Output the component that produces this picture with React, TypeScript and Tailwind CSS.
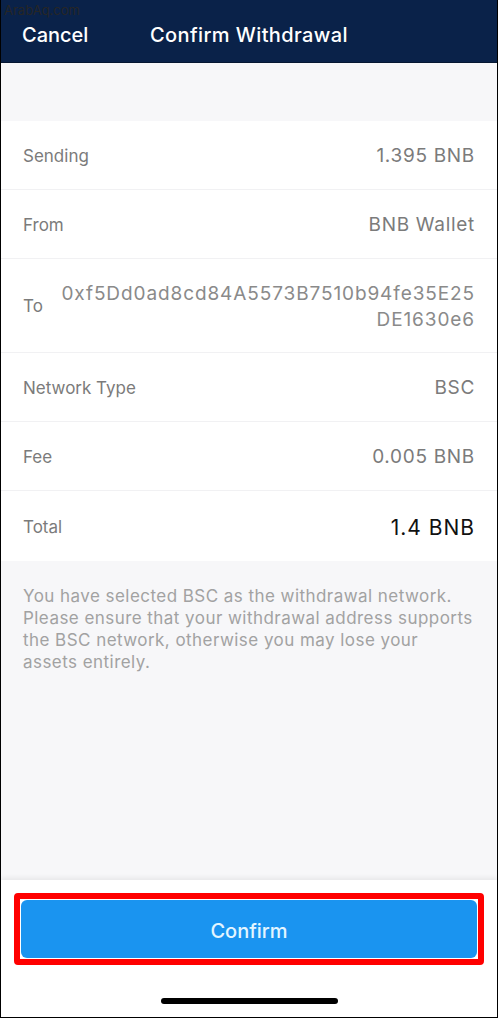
const font = { fontFamily: "Inter, 'Liberation Sans', sans-serif" };

function Row({ label, value }: { label: string; value: string }) {
  return (
    <div className="flex h-[69px] items-center justify-between border-b border-[#f1f1f3] px-[22px] pt-[3px]">
      <span className="text-[17px] text-[#7b7b7b]">{label}</span>
      <span className="text-[19px] tracking-[0.7px] text-[#7b7b7b]">{value}</span>
    </div>
  );
}

export default function App() {
  return (
    <div
      style={font}
      className="relative flex h-[1018px] w-[498px] flex-col overflow-hidden border-x border-b border-black bg-[#f7f7f9]"
    >
      <span className="absolute left-[3px] top-[1px] text-[13px] text-[#262626]">ArabAq.com</span>

      <header className="grid h-[63px] grid-cols-[1fr_auto_1fr] items-center border-b border-[#061732] bg-[#0a2249] px-[21px] pt-[8px] text-[20px] font-medium text-white">
        <span>Cancel</span>
        <span className="tracking-[0.4px]">Confirm Withdrawal</span>
        <span />
      </header>

      <div className="h-[58px]" />

      <div className="bg-white">
        <Row label="Sending" value="1.395 BNB" />
        <Row label="From" value="BNB Wallet" />
        <div className="flex h-[94px] items-center justify-between border-b border-[#f1f1f3] px-[22px] pt-[3px]">
          <span className="text-[17px] text-[#7b7b7b]">To</span>
          <span className="text-right text-[19px] leading-[26px] tracking-[0.9px] text-[#8a8a8a]">
            0xf5Dd0ad8cd84A5573B7510b94fe35E25
            <br />
            DE1630e6
          </span>
        </div>
        <Row label="Network Type" value="BSC" />
        <Row label="Fee" value="0.005 BNB" />
        <div className="flex h-[70px] items-center justify-between px-[22px] pt-[3px]">
          <span className="text-[17px] text-[#7b7b7b]">Total</span>
          <span className="text-[21px] tracking-[1px] text-[#111]">1.4 BNB</span>
        </div>
      </div>

      <p className="flex-1 whitespace-nowrap px-[22px] pt-[24px] text-[17px] leading-[22px] tracking-[0.45px] text-[#a2a2a2]">
        You have selected BSC as the withdrawal network.
        <br />
        Please ensure that your withdrawal address supports
        <br />
        the BSC network, otherwise you may lose your
        <br />
        assets entirely.
      </p>

      <div className="flex h-[137px] flex-col bg-white px-[13px] pt-[13px] shadow-[0_-2px_5px_rgba(0,0,0,0.07)]">
        <div className="rounded-[4px] border-[6px] border-[#ff0000] p-px">
          <button className="flex h-[58px] w-full items-center justify-center rounded-[6px] bg-[#1a94f0] pt-[3px] text-[20px] font-medium text-[#e3f5ff]">
            Confirm
          </button>
        </div>
        <div className="mx-auto mt-[33px] h-[6px] w-[177px] rounded-full bg-black" />
      </div>
    </div>
  );
}
